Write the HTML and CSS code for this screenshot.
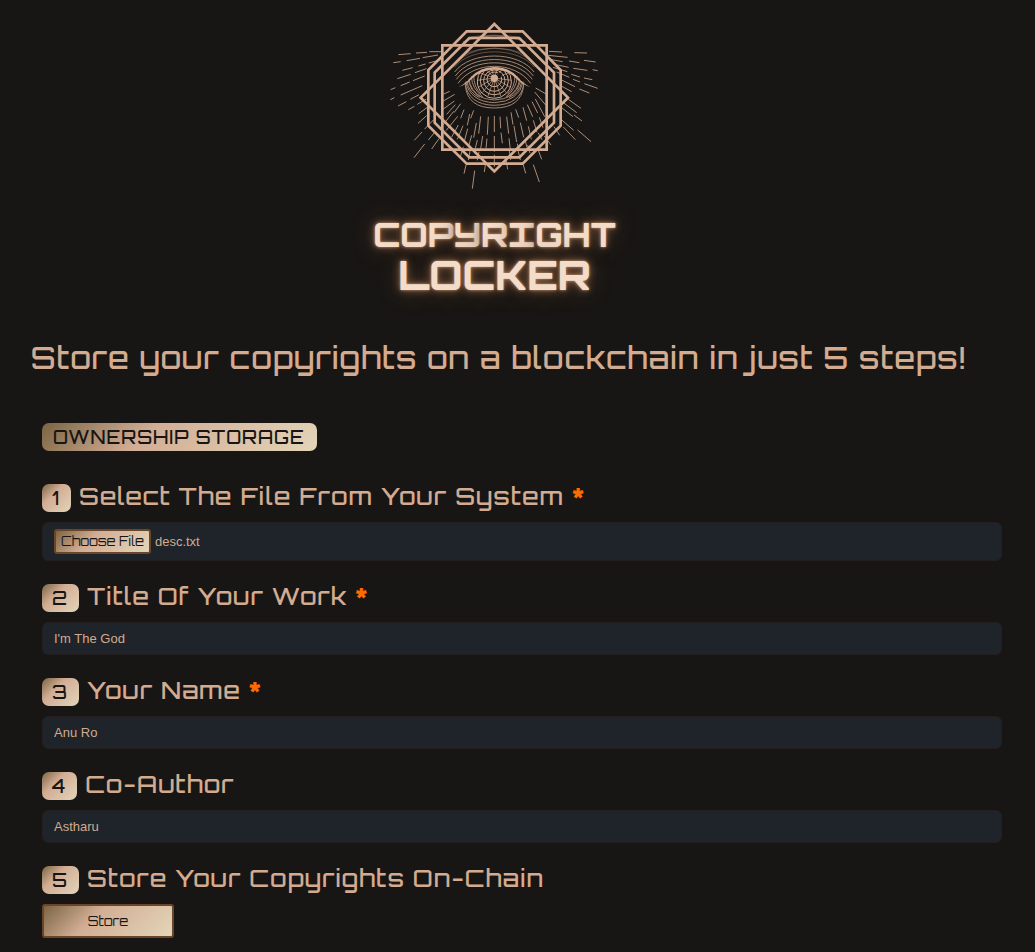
FILE: index.html
```html
<!DOCTYPE html>
<html lang="en">
<head>
<meta charset="utf-8">
<meta name="viewport" content="width=device-width, initial-scale=1">
<title>Copyright Locker</title>
<link rel="stylesheet" href="styles.css">
</head>
<body>
<header class="hero">
  <svg class="emblem" viewBox="0 0 690 570" role="img" aria-label="All-seeing eye emblem">
    <g class="rays">
      <path d="M55 134L92 131M108 129L141 127M148 125L184 125M40 158L62 155M80 152L120 145M128 143L174 135M67 181L98 173M115 168L137 162M146 159L182 149M52 206L92 193M105 188L139 176M32 239L46 233M62 227L89 216M99 212L134 198M31 269L43 263M62 255L127 227M54 288L79 275M91 268L117 254M85 299L103 289M112 283L139 267M116 311L142 292M114 340L140 317M103 391L126 366M134 357L160 330M102 443L134 402M145 390L164 367M155 417L177 386M252 491L258 465M277 536L284 482M313 486L317 458"/>
      <path d="M507 124L546 126M504 136L563 142M583 128L621 129M509 148L548 155M567 153L598 158M612 151L647 156M522 163L566 172M580 175L622 181M638 179L653 182M519 172L562 185M574 193L600 201M612 204L637 209M530 186L568 202M579 208L600 216M613 221L653 235M545 210L585 230M598 237L628 249M542 227L575 245M565 268L603 295M550 278L590 308M545 293L579 320M582 315L606 333M542 327L581 361M593 360L633 395M550 351L586 389M522 350L539 376M493 378L513 405M475 421L485 448M460 464L478 516M430 465L437 490M379 452L383 478"/>
      <path d="M191 252L209 244M190 273L224 253M190 297L223 273M200 313L226 284M188 346L221 304M198 362L233 319M215 381L235 345M232 388L249 347M242 325L252 299M222 308L242 281M253 394L263 356M262 346L269 312M265 412L275 376M272 325L281 301M281 383L289 339M286 415L292 390M296 371L302 319M302 417L308 378M322 374L325 320M318 414L321 386M343 366V318M343 425V378M362 355L360 320M367 400L363 368M386 371L380 320M391 420L387 385M399 344L393 307M410 396L402 348M417 423L412 401M416 323L407 298M431 382L421 338M442 416L435 389M440 332L429 292M454 388L445 349M458 320L442 284M471 367L460 331M486 389L475 369M473 309L456 275M489 353L478 322M494 320L466 267M497 285L464 246M498 252L467 234M240 444L250 410M265 450L270 423M292 451L297 425M343 470V434M392 450L388 423M421 450L414 421M450 430L443 405"/>
    </g>
    <g class="lids">
      <path d="M224 186C270 122 416 122 462 186M226 198C272 132 414 132 460 198M229 208C276 142 410 142 457 208M234 220C282 152 404 152 452 220"/>
      <path class="faint" d="M223 172C270 110 416 110 463 172M232 156C282 102 404 102 454 156M249 95Q343 60 437 95M262 88Q343 66 424 88M272 81Q343 70 414 81M250 132Q343 96 436 132"/>
      <path d="M256 226Q262 294 343 294Q424 294 431 226M255 218Q264 284 343 286Q424 284 432 218M257 215Q270 275 343 278Q416 275 430 215M265 214Q280 268 343 270Q406 268 422 214"/>
      <path d="M260 214Q268 249 299 263M267 206Q270 242 306 263M274 199Q276 237 308 260M281 194Q281 232 303 252M426 214Q418 249 387 263M419 206Q416 242 380 263M412 199Q410 237 378 260M405 194Q405 232 383 252"/>
    </g>
    <g class="iris">
      <path class="disc" d="M305 180A51 51 0 1 0 381 180Q343 170 305 180Z"/>
      <path d="M312 184A42 42 0 1 0 374 184"/>
      <circle cx="343" cy="212" r="32"/>
      <circle cx="343" cy="208" r="22"/>
      <path class="spokes" d="M343 204V262M343 204L324 258M343 204L307 248M343 204L295 232M343 204L291 211M343 204L298 188M343 204L318 178M343 204L334 176M343 204L352 176M343 204L368 178M343 204L388 188M343 204L395 211M343 204L391 232M343 204L379 248M343 204L362 258"/>
      <circle class="glow" cx="343" cy="205" r="10"/>
      <circle class="pupil" cx="359" cy="195" r="7"/>
    </g>
    <path class="lash" d="M233 232Q257 223 272 202Q299 172 343 171Q388 172 414 202Q430 223 453 232Q429 226 411 208Q384 179 343 179Q301 179 274 208Q257 226 233 232Z"/>
    <g class="frame">
      <path d="M187 106H500V419H187Z"/>
      <path d="M343 42L564 263L343 484L122 263Z"/>
      <path d="M260 64H428L542 180V347L428 461H260L145 347V180Z"/>
      <path d="M268 84H418L522 188V338L418 442H268L164 338V188Z"/>
    </g>
  </svg>
  <p class="brand"><span class="brand-top">COP<span class="alt">Y</span>R<span class="alt">I</span>GHT</span><span class="brand-bottom">LOCKER</span></p>
  <h1 class="tagline">Store your copyrights on a blockchain in just 5 steps!</h1>
</header>
<main class="content">
  <h2 class="pill">OWNERSHIP STORAGE</h2>
  <form class="steps">
    <div class="step">
      <label class="step-label" for="file"><span class="num">1</span><span>Select The File From Your System <span class="req">*</span></span></label>
      <div class="field file-field">
        <input class="file-input" type="file" id="file">
        <label class="file-button" for="file">Choose File</label>
        <span class="file-name">desc.txt</span>
      </div>
    </div>
    <div class="step">
      <label class="step-label" for="title"><span class="num">2</span><span>Title Of Your Work <span class="req">*</span></span></label>
      <input class="field" type="text" id="title" value="I'm The God">
    </div>
    <div class="step">
      <label class="step-label" for="name"><span class="num">3</span><span>Your Name <span class="req">*</span></span></label>
      <input class="field" type="text" id="name" value="Anu Ro">
    </div>
    <div class="step">
      <label class="step-label" for="coauthor"><span class="num">4</span><span>Co-Author</span></label>
      <input class="field" type="text" id="coauthor" value="Astharu">
    </div>
    <div class="step">
      <label class="step-label" for="store"><span class="num">5</span><span>Store Your Copyrights On-Chain</span></label>
      <button class="store" type="button" id="store">Store</button>
    </div>
  </form>
</main>
</body>
</html>
```
FILE: styles.css
```css
:root {
  --bg: #181614;
  --copper: #d2ab91;
  --metal: linear-gradient(135deg, #7b6543 0%, #d2ad95 38%, #e3d5b9 100%);
  --display: Orbitron, "DejaVu Sans", sans-serif;
}
* { box-sizing: border-box; }
body {
  margin: 0;
  background: var(--bg);
  color: var(--copper);
  font-family: var(--display);
}
.hero {
  display: flex;
  flex-direction: column;
  align-items: center;
  padding: 10px 46px 0 0;
}
.emblem { width: 230px; height: 190px; }
.emblem g { fill: none; stroke: var(--copper); }
.emblem .rays { stroke-width: 3; opacity: 0.8; }
.emblem .lids { stroke-width: 3; opacity: 0.75; }
.emblem .faint { opacity: 0.5; }
.emblem .iris { stroke-width: 3; }
.emblem .disc { fill: var(--bg); }
.emblem .spokes { stroke-width: 2; }
.emblem .frame { stroke-width: 8; }
.lash, .emblem .glow { fill: var(--copper); }
.emblem .pupil { fill: var(--bg); stroke: none; }
.brand {
  display: flex;
  flex-direction: column;
  align-items: center;
  margin: 15px 0 0;
  color: #f4dcca;
  font-weight: 800;
  text-shadow: 0 0 3px #c99a74, 0 0 9px #8d6344, 0 0 20px #5a3d2a;
}
.brand-top { font-size: 33px; line-height: 40px; }
.brand-bottom { font-size: 40px; line-height: 40px; }
.alt { font-feature-settings: "salt", "ss01"; }
.tagline {
  margin: 39px 0 0 8px;
  font-size: 30px;
  font-weight: 500;
  letter-spacing: 1px;
  line-height: 48px;
}
.content { padding: 41px 33px 14px 42px; }
.pill {
  width: fit-content;
  margin: 0 0 31px;
  padding: 0 12px 0 11px;
  border-radius: 7px;
  background: var(--metal);
  color: #181614;
  font-size: 18px;
  font-weight: 500;
  letter-spacing: 1px;
  line-height: 28px;
}
.steps { display: grid; gap: 21px; }
.step { display: grid; gap: 10px; justify-items: start; }
.step-label {
  display: flex;
  align-items: baseline;
  gap: 8px;
  font-size: 24px;
  font-weight: 500;
  letter-spacing: 1px;
  line-height: 28px;
}
.num {
  padding: 0 11px 0 10px;
  border-radius: 7px;
  background: var(--metal);
  color: #181614;
  font-size: 18px;
}
.req { color: #ff6a00; font-weight: 700; }
.field {
  width: 100%;
  padding: 7px 11px;
  border: 1px solid #241f1e;
  border-radius: 6px;
  background: #1e2429;
  color: var(--copper);
  font: 13px/17px "Liberation Sans", Arial, sans-serif;
}
.file-field {
  position: relative;
  display: flex;
  align-items: center;
  gap: 4px;
  padding: 6px 11px;
}
.file-input {
  position: absolute;
  inset: 0;
  width: 100%;
  opacity: 0;
}
.file-button, .store {
  border: 2px solid #6b4527;
  border-radius: 3px;
  background: var(--metal);
  color: #181614;
  font-family: var(--display);
  font-size: 13px;
}
.file-button { padding: 0 5px; line-height: 21px; }
.store { width: 132px; padding: 0; line-height: 30px; }
```
